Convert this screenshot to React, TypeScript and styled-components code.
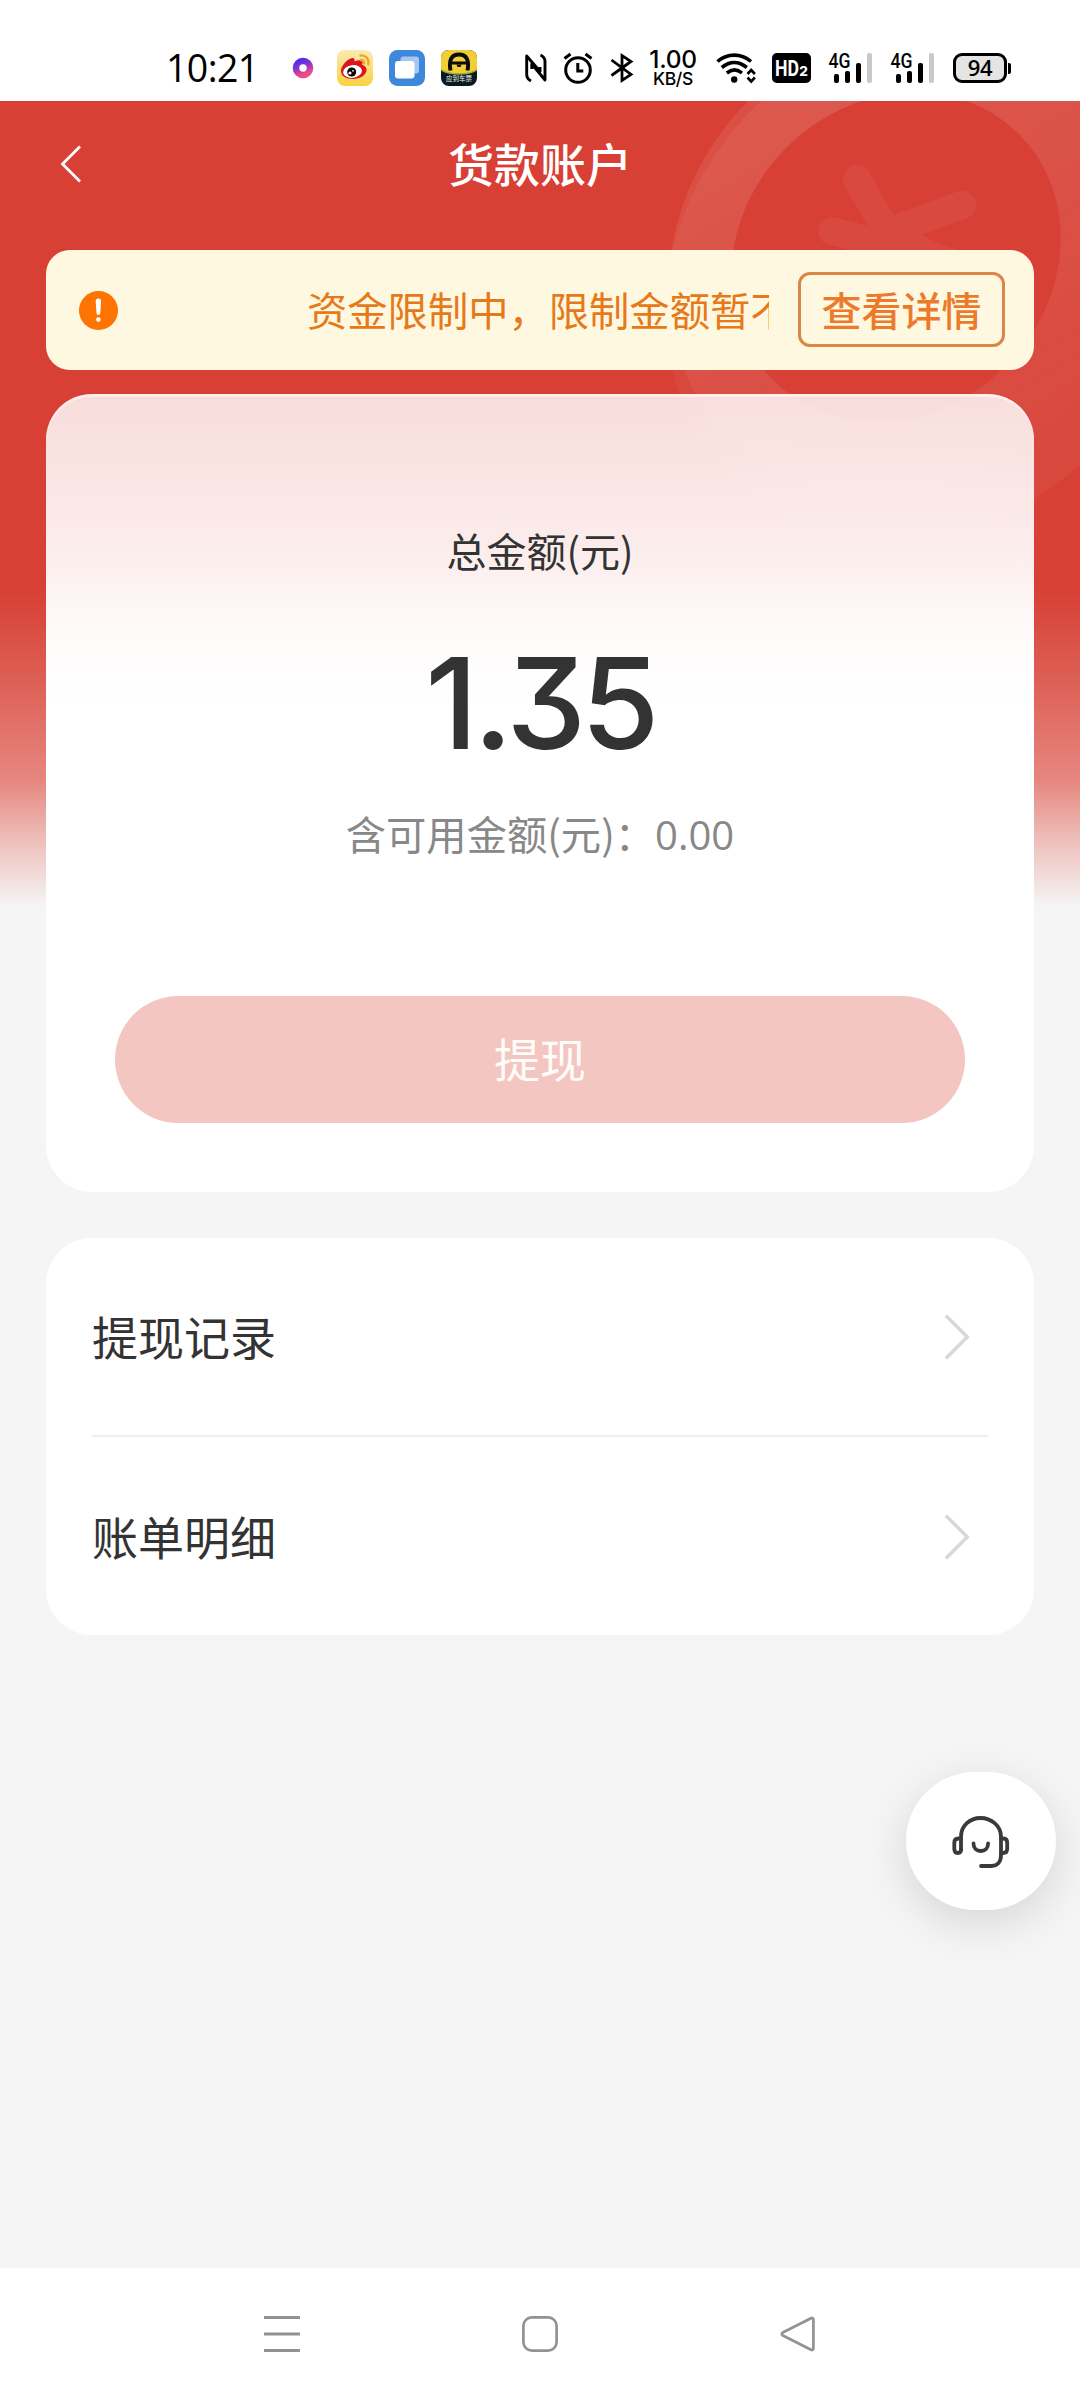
import React from "react";
import styled, { createGlobalStyle } from "styled-components";

const GlobalStyle = createGlobalStyle`
  * { box-sizing: border-box; }
  html, body { margin: 0; padding: 0; }
  body {
    background: #f5f5f5;
    font-family: "Noto Sans CJK SC", "Noto Sans", sans-serif;
    color: #333;
  }
  button { font: inherit; border: 0; padding: 0; cursor: pointer; }
  svg { display: block; overflow: visible; }
`;

const Screen = styled.div`
  position: relative;
  width: 1080px;
  height: 2400px;
  overflow: hidden;
  display: flex;
  flex-direction: column;
  background: #f5f5f5;
`;

/* ---------- status bar ---------- */

const StatusBar = styled.header`
  height: 101px;
  flex: none;
  display: flex;
  align-items: center;
  padding-top: 35px;
  background: #fff;
  color: #000;
`;

const Clock = styled.div`
  width: 127px;
  margin-left: 166px;
  padding-bottom: 1px;
  font-family: "Open Sans", sans-serif;
  font-size: 37.5px;
  line-height: 40px;
  letter-spacing: -0.6px;
`;

const StatusItem = styled.div<{ $gap?: number; $width: number }>`
  flex: none;
  width: ${(p) => p.$width}px;
  margin-left: ${(p) => p.$gap ?? 0}px;
`;

const Speed = styled.div`
  display: flex;
  flex-direction: column;
  align-items: center;
  white-space: nowrap;
  font-family: Inter, sans-serif;
  font-weight: 500;
`;

const SpeedValue = styled.span`
  font-size: 24.5px;
  line-height: 21px;
  letter-spacing: -0.3px;
`;

const SpeedUnit = styled.span`
  font-size: 17.5px;
  line-height: 18px;
  letter-spacing: -0.3px;
`;

const Battery = styled.div`
  display: flex;
  align-items: center;
`;

const BatteryBody = styled.div`
  width: 54px;
  height: 30px;
  border: 3px solid #000;
  border-radius: 9px;
  background: #e4e4e4;
  display: flex;
  align-items: center;
  justify-content: center;
  font-family: "Open Sans", sans-serif;
  font-weight: 600;
  font-size: 22px;
  line-height: 22px;
  padding-bottom: 2px;
  letter-spacing: -0.3px;
`;

const BatteryTip = styled.div`
  width: 3px;
  height: 11px;
  margin-left: 1px;
  border-radius: 0 2px 2px 0;
  background: #000;
`;

/* ---------- page ---------- */

const Page = styled.main`
  position: relative;
  flex: 1;
  padding: 0 46px;
  background: linear-gradient(
    #d84035 0px,
    #d84035 490px,
    #dd6056 580px,
    #e68780 680px,
    #edbbb6 735px,
    #f1dcda 775px,
    #f5f5f5 805px
  );
`;

const CoinArt = styled.svg`
  position: absolute;
  top: 0;
  right: 0;
  overflow: hidden;
`;

const TitleBar = styled.div`
  position: relative;
  height: 149px;
  padding-bottom: 23px;
  display: grid;
  grid-template-columns: 60px 1fr 60px;
  align-items: center;
`;

const BackButton = styled.button`
  padding-left: 14px;
  background: none;
`;

const Title = styled.h1`
  margin: 0;
  padding-bottom: 4px;
  text-align: center;
  color: #fff;
  font-size: 46px;
  line-height: 60px;
  font-weight: 500;
`;

const Notice = styled.section`
  position: relative;
  height: 120px;
  border-radius: 24px;
  background: #fff8e1;
  display: flex;
  align-items: center;
  padding: 0 29px 0 33px;
`;

const Marquee = styled.div`
  flex: 1;
  min-width: 0;
  margin: 0 29px 0 44px;
  padding: 0 0 2px 145px;
  overflow: hidden;
  white-space: nowrap;
  font-size: 40.3px;
  line-height: 60px;
  color: #e6791a;
`;

const DetailButton = styled.button`
  flex: none;
  width: 207px;
  height: 75px;
  margin-bottom: 1px;
  padding-bottom: 2px;
  border: 3px solid #d98748;
  border-radius: 12px;
  background: transparent;
  color: #ec7a2b;
  font-size: 40px;
  line-height: 60px;
  font-weight: 500;
`;

const BalanceCard = styled.section`
  position: relative;
  height: 798px;
  margin-top: 24px;
  padding: 126px 69px 0;
  border-radius: 46px;
  background: linear-gradient(
    rgba(255, 255, 255, 0.82) 0px,
    rgba(255, 255, 255, 0.9) 150px,
    rgba(255, 255, 255, 0.97) 230px,
    #fff 310px
  );
  box-shadow: inset 0 3px 1px rgba(255, 255, 255, 0.5);
  display: flex;
  flex-direction: column;
  align-items: center;
`;

const Label = styled.div`
  font-size: 40px;
  line-height: 60px;
`;

const Amount = styled.div`
  margin-top: 48px;
  font-family: Inter, sans-serif;
  font-feature-settings: "cv09";
  font-weight: 500;
  font-size: 127px;
  line-height: 150px;
  letter-spacing: -5px;
`;

const Point = styled.span`
  margin: 0 -2px 0 5px;
  font-family: Lato, sans-serif;
  font-weight: 700;
  letter-spacing: 0;
  line-height: 1;
`;

const Available = styled.div`
  margin-top: 25px;
  font-size: 40.3px;
  line-height: 60px;
  color: #888;
  white-space: nowrap;
`;

const Figure = styled.span`
  font-family: "Open Sans", sans-serif;
  font-size: 40px;
  line-height: 1;
`;

const WithdrawButton = styled.button`
  width: 100%;
  height: 127px;
  margin-top: 133px;
  padding-bottom: 5px;
  border-radius: 64px;
  background: #f4c6c1;
  color: #fffdfa;
  font-size: 46px;
  line-height: 60px;
  flex: none;
`;

const Menu = styled.nav`
  position: relative;
  height: 397px;
  margin-top: 46px;
  padding: 0 46px;
  border-radius: 46px;
  background: #fff;
`;

const MenuRow = styled.div`
  height: 197px;
  display: flex;
  align-items: center;
  justify-content: space-between;
  padding-right: 18px;
  font-size: 46px;
  line-height: 60px;

  & + & {
    height: 202px;
    border-top: 2px solid #f0f0f0;
  }
`;

const MenuText = styled.span`
  padding-bottom: 4px;
`;

const SupportButton = styled.button`
  position: absolute;
  right: 24px;
  top: 1671px;
  width: 150px;
  height: 138px;
  padding: 2px 3px 0 0;
  border-radius: 75px;
  background: #fff;
  box-shadow: 0 12px 46px rgba(0, 0, 0, 0.13);
  display: flex;
  align-items: center;
  justify-content: center;
`;

const SystemNav = styled.footer`
  flex: none;
  height: 132px;
  background: #fff;
  display: grid;
  grid-template-columns: repeat(3, 258px);
  justify-content: center;
  justify-items: center;
  align-items: center;
`;

/* ---------- icons ---------- */

const DotIcon = () => (
  <svg width="20" height="36" viewBox="0 0 20 36">
    <defs>
      <linearGradient id="dot" x1="0" y1="0" x2="0.4" y2="1">
        <stop offset="0" stopColor="#4a2cf0" />
        <stop offset="0.55" stopColor="#9038c8" />
        <stop offset="1" stopColor="#ee4a8c" />
      </linearGradient>
    </defs>
    <circle cx="10" cy="18" r="7" fill="none" stroke="url(#dot)" strokeWidth="6.6" />
  </svg>
);

const WeiboIcon = () => (
  <svg width="36" height="36" viewBox="0 0 36 36">
    <defs>
      <linearGradient id="wb" x1="0" y1="0" x2="0" y2="1">
        <stop offset="0" stopColor="#fbe9b4" />
        <stop offset="1" stopColor="#fbd23f" />
      </linearGradient>
    </defs>
    <rect width="36" height="36" rx="8" fill="url(#wb)" />
    <path
      d="M4 21c0-5 6-12 11-13 2-.3 3.200 1.300 2.600 3.500 3-1.500 7-2 7.800 0 .5 1-.1 2.300-.4 3.300 2 .7 4.500 2 4.500 5.200 0 5-6.500 9-13.500 9S4 26 4 21Z"
      fill="#dc1420"
    />
    <ellipse cx="15.500" cy="21.500" rx="9.500" ry="6.300" fill="#fff" transform="rotate(-8 15.500 21.500)" />
    <circle cx="14.700" cy="22" r="4.500" fill="#000" />
    <circle cx="13" cy="23" r="1.600" fill="#fff" />
    <circle cx="16" cy="20.800" r="0.900" fill="#fff" />
    <path d="M23.500 5.500c5-.8 9 3.500 7.800 8.700M23.800 10c2.200-.3 3.800 1.300 3.300 3.500" fill="none" stroke="#e9ab2c" strokeWidth="2.400" strokeLinecap="round" />
  </svg>
);

const FilesIcon = () => (
  <svg width="36" height="36" viewBox="0 0 36 36">
    <rect width="36" height="36" rx="8.500" fill="#3e88dc" />
    <rect x="11.500" y="6.500" width="18.500" height="17" rx="3" fill="#a5c8f2" />
    <rect x="6" y="11" width="19.500" height="17.500" rx="3" fill="#fff" />
  </svg>
);

const TicketIcon = () => (
  <svg width="36" height="36" viewBox="0 0 36 36">
    <defs>
      <clipPath id="tk">
        <rect width="36" height="36" rx="8" />
      </clipPath>
    </defs>
    <g clipPath="url(#tk)">
      <rect width="36" height="36" fill="#0b1a20" />
      <path d="M0 0h36v20c-9 5-27 5-36 0Z" fill="#f3cc36" />
      <path d="M0 19.500c9 6 27 6 36 0" fill="none" stroke="#9fae3a" strokeWidth="1.500" />
      <path d="M9.500 20.500C7.500 10 10.500 4.600 18 4.600S28.500 10 26.500 20.500" fill="none" stroke="#0b0d0c" strokeWidth="4" />
      <path d="M11 11.500h14v3H11z" fill="#0b0d0c" />
      <path d="M15.500 14.500h5l-1 2.500h-3z" fill="#0b0d0c" />
      <text x="18" y="30.500" fontSize="6.500" fill="#e8f1ef" textAnchor="middle">
        应到车票
      </text>
    </g>
  </svg>
);

const NfcIcon = () => (
  <svg width="22" height="30" viewBox="0 0 22 30" fill="none" stroke="#000" strokeWidth="2.900" strokeLinejoin="round">
    <path d="M6 28C3 26.500 1.700 24.500 1.700 21.500V3L15 18.500V14" />
    <path d="M15.500 2C18.700 3.500 20 5.500 20 8.500V27L6.800 11V16" />
  </svg>
);

const AlarmIcon = () => (
  <svg width="30" height="32" viewBox="0 0 30 32" fill="none" stroke="#000" strokeWidth="3">
    <circle cx="15" cy="18" r="12.300" />
    <path d="M14.800 11v8h5.500" />
    <path d="M1.500 6.500 7.500 2M28.500 6.500 22.500 2" />
  </svg>
);

const BluetoothIcon = () => (
  <svg width="24" height="30" viewBox="0 0 24 30" fill="none" stroke="#000" strokeWidth="2.800" strokeLinejoin="miter">
    <path d="M1.500 7 21 21.500 12 27.500V2.500L21 8.500 1.500 22.500" />
  </svg>
);

const WifiIcon = () => (
  <svg width="40" height="32" viewBox="0 0 40 32" fill="none" stroke="#000" strokeWidth="3.600">
    <path d="M1.500 9.500C11.500 1 25 1 35 9.500" />
    <path d="M5.800 15.500c8-6.600 17-6.600 25 0" />
    <path d="M10.800 21c5-4 10.500-4 15.200 0" />
    <circle cx="18.200" cy="27.500" r="3.200" fill="#000" stroke="none" />
    <path d="M31.500 22l3.700-4 3.700 4M31.500 25.500l3.700 4 3.700-4" strokeWidth="2.600" />
  </svg>
);

const HdIcon = () => (
  <svg width="39" height="30" viewBox="0 0 39 30">
    <rect width="39" height="30" rx="5" fill="#000" />
    <text x="3" y="22.800" fontFamily="Roboto" fontWeight="700" fontSize="21.500" textLength="24" lengthAdjust="spacingAndGlyphs" fill="#fff">
      HD
    </text>
    <text x="27.200" y="22.800" fontFamily="Inter" fontWeight="800" fontSize="13.500" fill="#fff">
      2
    </text>
  </svg>
);

const SignalIcon = () => (
  <svg width="46" height="30" viewBox="0 0 46 30">
    <text x="0.500" y="14.500" fontFamily="Roboto" fontWeight="500" fontSize="19.500" textLength="22" lengthAdjust="spacingAndGlyphs">
      4G
    </text>
    <rect x="6" y="21" width="5" height="9" rx="2" />
    <rect x="17" y="18" width="5" height="12" rx="2" />
    <rect x="28" y="10" width="5" height="20" rx="2" />
    <rect x="39" y="0" width="5" height="30" rx="2" fill="#c9c9c9" />
  </svg>
);

const BackIcon = () => (
  <svg width="21" height="38" viewBox="0 0 21 38" fill="none" stroke="#fff" strokeWidth="2.800">
    <path d="M20 1.500 2.500 19 20 36.500" />
  </svg>
);

const AlertIcon = () => (
  <svg width="39" height="39" viewBox="0 0 39 39">
    <circle cx="19.500" cy="19.500" r="19.500" fill="#ff7300" />
    <path d="M16.700 10.300a2.700 2.700 0 0 1 5.400 0l-.8 11.700a1.900 1.900 0 0 1-3.800 0Z" fill="#fff" />
    <circle cx="19.400" cy="28.600" r="2.300" fill="#fff" />
  </svg>
);

const ChevronIcon = () => (
  <svg width="26" height="46" viewBox="0 0 26 46" fill="none" stroke="#d8d8d8" strokeWidth="3.400">
    <path d="M1.800 1.500 23.300 23 1.800 44.500" />
  </svg>
);

const HeadsetIcon = () => (
  <svg width="60" height="54" viewBox="0 0 60 54" fill="none" stroke="#3a3a3c" strokeWidth="3.800" strokeLinecap="round" strokeLinejoin="round">
    <path d="M11 35V22C11 10.500 20 3 30.500 3S51 10.500 51 22v18c0 7-3.500 11-9.500 11H31" />
    <path d="M11 23.500H8.500c-3 0-4.200 1.500-4.200 4.200v6c0 2.700 1.200 4.300 3.500 4.300s3.200-1 3.200-3.500" />
    <path d="M51 23.500h2.300c2.700 0 3.900 1.500 3.900 4.200v6c0 2.700-1.200 4.300-3.900 4.300H51" />
    <path d="M23.500 28.500c0 4.500 2.900 7.500 7.300 7.500s7.300-3 7.300-7.500" />
  </svg>
);

const MenuIcon = () => (
  <svg width="36" height="36" viewBox="0 0 36 36" stroke="#929292" strokeWidth="3">
    <path d="M0 1.500h36M0 18h36M0 34.500h36" />
  </svg>
);

const HomeIcon = () => (
  <svg width="36" height="36" viewBox="0 0 36 36">
    <rect x="1.400" y="1.400" width="33.200" height="33.200" rx="8.500" fill="none" stroke="#929292" strokeWidth="2.700" />
  </svg>
);

const TriangleIcon = () => (
  <svg width="36" height="36" viewBox="0 0 36 36" fill="none" stroke="#929292" strokeWidth="2.700" strokeLinejoin="round">
    <path d="M31 2.200 2.800 16.500c-1.300.7-1.300 2.300 0 3L31 33.800c1.200.6 2.400 0 2.400-1.300v-29c0-1.300-1.200-1.900-2.400-1.300Z" />
  </svg>
);

/* Tilted coin with a yen-like mark, drawn in screen coordinates. */
const Coin = () => (
  <CoinArt width="480" height="460" viewBox="600 101 480 460">
    <defs>
      <mask id="ring">
        <rect x="600" y="101" width="480" height="460" fill="#fff" />
        <ellipse cx="896" cy="257" rx="174" ry="155" transform="rotate(-45 896 257)" fill="#000" />
      </mask>
      <linearGradient id="face" gradientUnits="userSpaceOnUse" x1="1000" y1="101" x2="900" y2="480">
        <stop offset="0" stopColor="#fff" stopOpacity="0.085" />
        <stop offset="1" stopColor="#fff" stopOpacity="0.01" />
      </linearGradient>
    </defs>
    <g mask="url(#ring)">
      <ellipse cx="924" cy="280" rx="274" ry="242" transform="rotate(-45 924 280)" fill="#fff" fillOpacity="0.045" />
      <ellipse cx="907" cy="256" rx="254" ry="222" transform="rotate(-45 907 256)" fill="url(#face)" />
    </g>
    <g stroke="#fff" strokeWidth="28" strokeLinecap="round" fill="none" opacity="0.05">
      <path d="M857 179 887 232 950 266M962 205 885 233M832 231 950 262" />
    </g>
  </CoinArt>
);

const menu = ["提现记录", "账单明细"];

export default function App() {
  return (
    <Screen>
      <GlobalStyle />
      <StatusBar>
        <Clock>10:21</Clock>
        <StatusItem $width={20}><DotIcon /></StatusItem>
        <StatusItem $width={36} $gap={24}><WeiboIcon /></StatusItem>
        <StatusItem $width={36} $gap={16}><FilesIcon /></StatusItem>
        <StatusItem $width={36} $gap={16}><TicketIcon /></StatusItem>
        <StatusItem $width={22} $gap={48}><NfcIcon /></StatusItem>
        <StatusItem $width={30} $gap={16}><AlarmIcon /></StatusItem>
        <StatusItem $width={24} $gap={17}><BluetoothIcon /></StatusItem>
        <StatusItem $width={50} $gap={14}>
          <Speed>
            <SpeedValue>1.00</SpeedValue>
            <SpeedUnit>KB/S</SpeedUnit>
          </Speed>
        </StatusItem>
        <StatusItem $width={40} $gap={18}><WifiIcon /></StatusItem>
        <StatusItem $width={39} $gap={16}><HdIcon /></StatusItem>
        <StatusItem $width={46} $gap={17}><SignalIcon /></StatusItem>
        <StatusItem $width={46} $gap={16}><SignalIcon /></StatusItem>
        <StatusItem $width={58} $gap={17}>
          <Battery>
            <BatteryBody>94</BatteryBody>
            <BatteryTip />
          </Battery>
        </StatusItem>
      </StatusBar>

      <Page>
        <Coin />
        <TitleBar>
          <BackButton aria-label="back"><BackIcon /></BackButton>
          <Title>货款账户</Title>
        </TitleBar>

        <Notice>
          <AlertIcon />
          <Marquee>资金限制中，限制金额暂不</Marquee>
          <DetailButton>查看详情</DetailButton>
        </Notice>

        <BalanceCard>
          <Label>总金额(元)</Label>
          <Amount>1<Point>.</Point>35</Amount>
          <Available>含可用金额(元)：<Figure>0.00</Figure></Available>
          <WithdrawButton>提现</WithdrawButton>
        </BalanceCard>

        <Menu>
          {menu.map((item) => (
            <MenuRow key={item}>
              <MenuText>{item}</MenuText>
              <ChevronIcon />
            </MenuRow>
          ))}
        </Menu>

        <SupportButton aria-label="support"><HeadsetIcon /></SupportButton>
      </Page>

      <SystemNav>
        <MenuIcon />
        <HomeIcon />
        <TriangleIcon />
      </SystemNav>
    </Screen>
  );
}
